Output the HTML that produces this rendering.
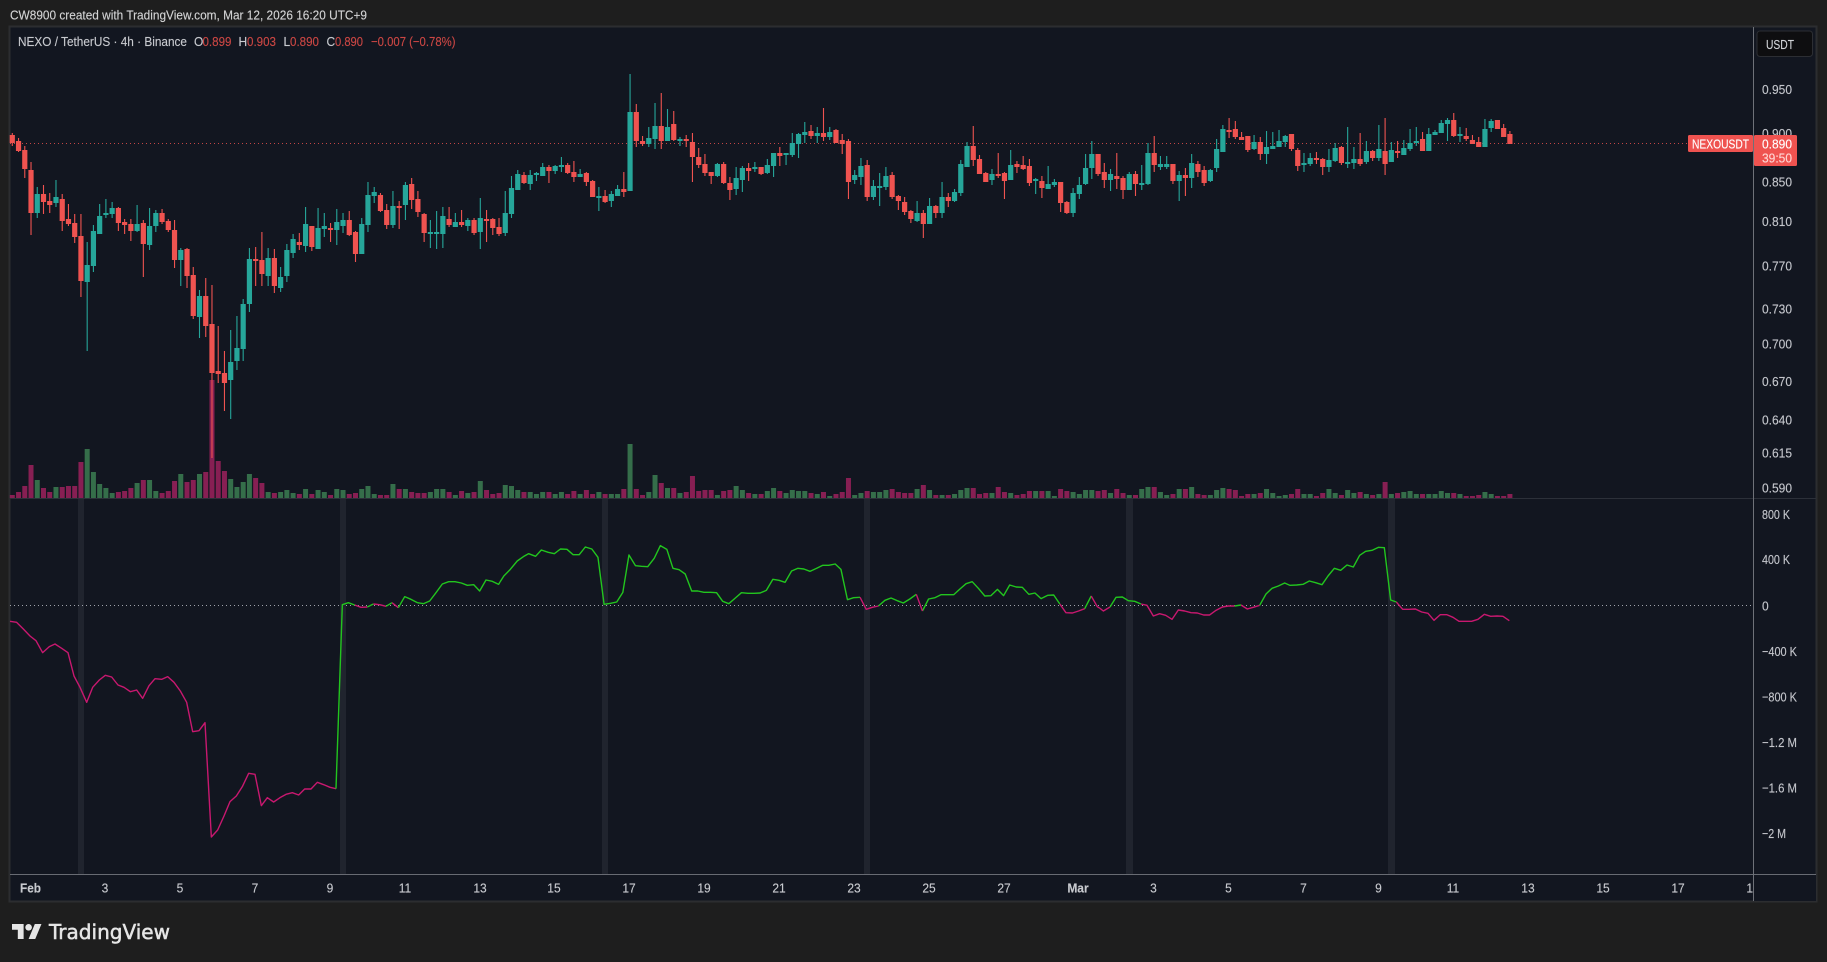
<!DOCTYPE html>
<html lang="en"><head><meta charset="utf-8"><title>NEXO / TetherUS chart</title>
<style>
html,body{margin:0;padding:0;background:#1e1e1e;width:1827px;height:962px;overflow:hidden}
svg{display:block;position:absolute;left:0;top:0}
text{font-family:"Liberation Sans",sans-serif;font-size:12px;fill:#c8cacf;stroke:#c8cacf;stroke-width:.2px;stroke-opacity:.6;transform-box:fill-box;transform-origin:50% 50%;transform:scaleY(1.1)}
path.n{vector-effect:non-scaling-stroke;fill:none}
.tr{fill:#cc4744;stroke:#cc4744}
.ax{fill:#c4c6cc}
</style></head>
<body>
<svg width="1827" height="962" viewBox="0 0 1827 962">
<rect width="1827" height="962" fill="#1e1e1e"/>
<text x="10" y="19" textLength="357" lengthAdjust="spacingAndGlyphs" style="fill:#d6d6d6">CW8900 created with TradingView.com, Mar 12, 2026 16:20 UTC+9</text>
<rect x="9.5" y="26.5" width="1807" height="875" fill="#121620" stroke="#2c2d30" stroke-width="2"/>

<!-- session bands -->
<g fill="#20242e">
<rect x="78" y="499" width="6" height="375"/><rect x="340" y="499" width="6" height="375"/><rect x="602" y="499" width="6" height="375"/><rect x="864" y="499" width="6" height="375"/><rect x="1126" y="499" width="7" height="375"/><rect x="1388" y="499" width="7" height="375"/>
</g>
<line x1="10" y1="143.5" x2="1690" y2="143.5" stroke="#ef5350" stroke-opacity=".8" stroke-dasharray="1 3"/>
<line x1="10" y1="605.5" x2="1753" y2="605.5" stroke="#b8bcc4" stroke-opacity=".85" stroke-dasharray="1 3"/>

<g transform="translate(12.3 0) scale(6.24 1)">
<!-- volume -->
<path class="n" stroke="#871f53" stroke-width="5" d="M0 498v-3M1 498v-6M2 498v-12M3 498v-33M5 498v-10M6 498v-6M8 498v-11M9 498v-12M10 498v-12M11 498v-36M17 498v-6M18 498v-7M19 498v-10M21 498v-18M24 498v-5M25 498v-7M26 498v-17M28 498v-16M29 498v-18M31 498v-26M32 498v-118M33 498v-37M34 498v-27M39 498v-20M40 498v-15M42 498v-5M46 498v-4M48 498v-4M51 498v-3M54 498v-4M55 498v-5M59 498v-3M60 498v-3M62 498v-9M64 498v-6M65 498v-5M66 498v-5M70 498v-6M72 498v-7M74 498v-6M76 498v-8M77 498v-4M78 498v-5M82 498v-6M86 498v-6M89 498v-4M90 498v-7M92 498v-8M93 498v-4M95 498v-4M98 498v-9M100 498v-9M101 498v-3M104 498v-15M106 498v-10M108 498v-6M109 498v-22M110 498v-7M111 498v-8M112 498v-8M114 498v-7M115 498v-8M118 498v-5M120 498v-4M123 498v-7M128 498v-5M130 498v-6M132 498v-4M133 498v-6M134 498v-20M137 498v-7M141 498v-9M142 498v-6M143 498v-5M144 498v-5M146 498v-13M148 498v-3M150 498v-3M154 498v-10M155 498v-4M156 498v-5M158 498v-11M159 498v-6M161 498v-3M162 498v-4M163 498v-7M165 498v-7M168 498v-9M169 498v-7M174 498v-7M175 498v-8M177 498v-9M178 498v-5M180 498v-3M183 498v-11M186 498v-4M188 498v-9M190 498v-4M191 498v-3M195 498v-9M196 498v-8M197 498v-2M198 498v-4M200 498v-5M205 498v-4M206 498v-9M209 498v-2M210 498v-5M213 498v-3M216 498v-6M218 498v-3M220 498v-16M222 498v-5M226 498v-4M231 498v-5M233 498v-2M234 498v-2M235 498v-3M238 498v-2M239 498v-2M240 498v-4"/>
<path class="n" stroke="#356e4a" stroke-width="5" d="M4 498v-18M7 498v-11M12 498v-49M13 498v-26M14 498v-14M15 498v-10M16 498v-5M20 498v-15M22 498v-18M23 498v-7M27 498v-24M30 498v-24M35 498v-19M36 498v-11M37 498v-16M38 498v-24M41 498v-6M43 498v-6M44 498v-8M45 498v-5M47 498v-9M49 498v-8M50 498v-6M52 498v-9M53 498v-8M56 498v-9M57 498v-12M58 498v-4M61 498v-14M63 498v-9M67 498v-6M68 498v-9M69 498v-9M71 498v-3M73 498v-5M75 498v-17M79 498v-13M80 498v-12M81 498v-8M83 498v-6M84 498v-4M85 498v-6M87 498v-4M88 498v-6M91 498v-4M94 498v-6M96 498v-4M97 498v-4M99 498v-54M102 498v-6M103 498v-23M105 498v-10M107 498v-5M113 498v-3M116 498v-12M117 498v-8M119 498v-4M121 498v-7M122 498v-10M124 498v-5M125 498v-8M126 498v-7M127 498v-7M129 498v-4M131 498v-2M135 498v-3M136 498v-5M138 498v-6M139 498v-6M140 498v-8M145 498v-9M147 498v-8M149 498v-3M151 498v-4M152 498v-8M153 498v-10M157 498v-5M160 498v-5M164 498v-7M166 498v-7M167 498v-2M170 498v-6M171 498v-4M172 498v-8M173 498v-8M176 498v-5M179 498v-3M181 498v-9M182 498v-11M184 498v-6M185 498v-3M187 498v-9M189 498v-11M192 498v-3M193 498v-8M194 498v-10M199 498v-4M201 498v-9M202 498v-5M203 498v-2M204 498v-3M207 498v-4M208 498v-4M211 498v-9M212 498v-5M214 498v-8M215 498v-5M217 498v-4M219 498v-4M221 498v-4M223 498v-6M224 498v-7M225 498v-4M227 498v-4M228 498v-4M229 498v-7M230 498v-5M232 498v-4M236 498v-6M237 498v-4"/>
<!-- red wicks -->
<path class="n" stroke="#ef5350" stroke-width="1.1" d="M0 133V146M1 138V152M2 146V178M3 162V235M5 185V214M6 193V213M8 194V231M9 204V226M10 214V243M11 214V297M17 207V231M18 219V234M19 219V241M21 220V277M24 209V224M25 219V232M26 220V268M28 248V288M29 267V319M31 278V337M32 285V458M33 326V383M34 351V411M39 247V286M40 232V286M42 249V293M46 233V250M48 226V251M51 223V242M54 211V236M55 231V262M59 193V212M60 204V229M62 201V229M64 178V209M65 191V217M66 213V242M70 207V227M72 210V227M74 218V235M76 210V242M77 218V235M78 218V236M82 172V184M86 165V183M89 163V174M90 161V182M92 172V186M93 180V197M95 190V203M98 172V197M100 104V147M101 136V146M104 93V149M106 111V141M108 135V147M109 133V182M110 148V168M111 154V176M112 172V184M114 162V184M115 177V200M118 163V181M120 167V175M123 147V166M128 125V139M130 108V141M132 129V143M133 134V154M134 139V199M137 160V201M141 172V199M142 195V210M143 197V215M144 210V223M146 210V238M148 205V218M150 193V207M154 126V166M155 155V174M156 172V182M158 153V178M159 172V199M161 161V173M162 156V170M163 159V186M165 176V198M168 182V212M169 201V214M174 154V176M175 163V188M177 153V189M178 176V199M180 171V196M183 136V172M186 164V184M188 168V196M190 161V177M191 166V186M195 118V138M196 121V139M197 132V140M198 136V152M200 137V160M205 134V151M206 148V171M209 152V164M210 158V175M213 146V165M216 133V166M218 150V161M220 118V175M222 141V158M226 132V151M231 113V137M233 128V141M234 135V144M235 137V147M238 120V129M239 124V137M240 131V144"/>
<!-- red bodies -->
<path class="n" stroke="#ef5350" stroke-width="5.2" d="M0 135V143M1 141V151M2 150V169M3 170V213M5 194V202M6 201V205M8 199V221M9 219V224M10 223V237M11 236V281M17 208V223M18 222V225M19 224V231M21 223V244M24 213V222M25 221V230M26 230V260M28 249V276M29 275V316M31 296V326M32 324V373M33 371V374M34 373V383M39 259V261M40 260V274M42 258V286M46 242V245M48 226V247M51 228V230M54 220V235M55 232V254M59 195V211M60 210V225M62 206V208M64 184V200M65 199V212M66 214V233M70 219V225M72 222V225M74 220V233M76 219V221M77 219V228M78 227V234M82 175V183M86 167V171M89 165V173M90 172V177M92 173V182M93 181V197M95 196V202M98 189V192M100 112V141M101 141V144M104 126V141M106 124V140M108 139V141M109 142V157M110 157V165M111 164V173M112 172V176M114 164V183M115 183V190M118 168V171M120 167V174M123 153V156M128 131V136M130 133V137M132 130V143M133 140V144M134 141V182M137 165V197M141 175V197M142 196V201M143 202V212M144 211V219M146 213V224M148 206V213M150 197V201M154 146V160M155 159V174M156 173V182M158 174V176M159 173V181M161 164V167M162 165V169M163 166V183M165 181V188M168 182V203M169 202V213M174 154V174M175 172V180M177 176V179M178 178V190M180 174V184M183 153V165M186 164V181M188 175V178M190 164V172M191 170V183M195 130V132M196 129V137M197 137V140M198 136V150M200 142V154M205 134V149M206 150V166M209 158V160M210 159V167M213 147V163M216 159V164M218 151V158M220 151V164M222 151V153M226 139V151M231 120V136M233 136V139M234 140V144M235 142V147M238 120V129M239 128V137M240 134V144"/>
<!-- teal wicks -->
<path class="n" stroke="#26a69a" stroke-width="1.1" d="M4 187V218M7 180V207M12 242V351M13 225V272M14 204V234M15 199V218M16 202V218M20 205V232M22 208V250M23 210V232M27 248V286M30 290V338M35 330V419M36 316V370M37 299V361M38 248V312M41 248V286M43 267V292M44 244V282M45 234V258M47 207V252M49 208V249M50 213V237M52 209V245M53 213V233M56 218V254M57 182V232M58 187V203M61 191V228M63 182V220M67 220V248M68 211V249M69 207V248M71 213V227M73 218V231M75 198V249M79 191V236M80 176V218M81 170V190M83 170V190M84 172V181M85 163V176M87 165V174M88 157V172M91 169V177M94 187V211M96 191V207M97 185V196M99 74V191M102 127V147M103 103V149M105 109V141M107 137V146M113 163V177M116 167V195M117 166V192M119 162V172M121 159V174M122 153V177M124 153V165M125 133V157M126 133V158M127 122V143M129 127V143M131 127V140M135 170V184M136 158V185M138 180V200M139 173V206M140 167V190M145 201V222M147 198V224M149 182V218M151 189V202M152 160V196M153 142V167M157 169V185M160 150V180M164 178V194M166 166V189M167 179V187M170 188V217M171 177V199M172 154V185M173 141V179M176 169V191M179 172V190M181 165V190M182 143V185M184 156V170M185 156V169M187 171V201M189 154V188M192 169V182M193 139V172M194 125V152M199 135V150M201 131V164M202 132V149M203 130V147M204 135V147M207 153V172M208 153V166M211 149V172M212 143V162M214 127V168M215 147V169M217 141V164M219 125V161M221 142V162M223 140V155M224 129V151M225 127V146M227 128V151M228 130V135M229 120V133M230 118V141M232 127V142M236 119V147M237 119V132"/>
<!-- teal bodies -->
<path class="n" stroke="#26a69a" stroke-width="5.2" d="M4 194V213M7 197V203M12 265V282M13 231V266M14 216V234M15 213V215M16 208V214M20 224V231M22 226V245M23 213V226M27 250V260M30 296V317M35 362V380M36 348V361M37 304V349M38 259V304M41 258V276M43 277V288M44 250V276M45 239V253M47 224V246M49 228V249M50 226V229M52 222V230M53 220V226M56 224V254M57 195V225M58 192V196M61 206V225M63 185V205M67 232V234M68 232V234M69 216V234M71 222V227M73 220V226M75 218V232M79 213V233M80 188V214M81 174V190M83 175V184M84 173V175M85 167V176M87 166V171M88 165V167M91 174V177M94 196V198M96 194V201M97 189V196M99 112V191M102 138V144M103 126V139M105 127V141M107 139V141M113 164V176M116 178V189M117 168V180M119 167V169M121 165V173M122 153V166M124 153V155M125 143V155M126 134V144M127 132V135M129 133V136M131 132V137M135 175V180M136 166V177M138 186V197M139 186V188M140 176V187M145 213V221M147 206V224M149 197V213M151 192V201M152 164V193M153 146V167M157 174V180M160 165V180M164 179V181M166 184V189M167 182V185M170 193V213M171 185V194M172 168V184M173 154V168M176 174V180M179 174V190M181 183V185M182 153V184M184 164V167M185 164V167M187 175V181M189 163V178M192 170V181M193 149V168M194 129V152M199 142V149M201 147V154M202 146V149M203 141V147M204 136V142M207 163V165M208 158V164M211 160V167M212 148V161M214 162V164M215 159V163M217 151V162M219 149V158M221 150V162M223 148V155M224 143V149M225 141V143M227 134V151M228 132V135M229 123V133M230 120V124M232 134V136M236 129V147M237 121V128"/>
</g>

<!-- indicator line -->
<g transform="translate(0 480) scale(.33333)" stroke-width="1.4" stroke-linejoin="round">
<path class="n" stroke="#c8186f" d="M30 424 50 427 70 447 90 468 108 482 128 518 148 500 165 492 185 505 204 518 222 588 240 622 260 667 278 622 298 600 316 586 335 591 354 615 372 622 391 635 410 630 428 655 447 617 465 596 485 598 503 590 522 607 541 633 560 667 578 755 597 752 615 728 634 1071 653 1050 672 1008 690 965 709 948 727 920 746 880 765 883 784 977 802 953 821 966 840 953 858 943 877 938 896 945 914 927 933 927 952 907 971 914 990 922 1008 926M1064 375 1083 382 1102 381M1120 372 1139 374 1158 379M1176 368 1195 383"/>
<path class="n" stroke="#22c51e" d="M1008 926 1027 374 1045 368 1064 375M1102 381 1120 372M1158 379 1176 368M1195 383 1214 350 1233 358 1252 368 1271 371 1289 363 1308 338 1327 312 1346 305 1365 305 1384 309 1402 316 1421 314 1439 333 1458 300 1477 304 1496 313 1500 306"/>
</g>
<g transform="translate(500 480) scale(.38265 .33333)" stroke-width="1.4" stroke-linejoin="round">
<path class="n" stroke="#22c51e" d="M0 306 10 288 27 268 45 243 61 230 75 221 93 229 108 210 126 217 142 221 158 207 175 208 191 224 207 224 223 201 240 207 256 232 272 373 289 370 305 366 321 337 337 225 354 257 370 259 386 260 403 235 419 197 436 208 452 265 468 269 484 282 501 333 517 333 533 337 550 337 566 338 582 364 598 371 615 354 631 338 648 340 664 340 680 339 696 331 713 298 729 301 745 307 762 273 778 265 794 267 810 274 827 265 843 256 859 256 876 252 891 268 908 359 924 353 941 352M989 378 1006 361 1022 354 1038 362 1054 369 1071 357 1088 343M1104 393 1120 357 1137 353 1153 344 1169 344 1186 344 1202 327 1218 311 1234 305 1251 326 1267 348 1283 347 1300 328 1316 347 1332 315 1349 321 1365 322 1382 343 1398 339 1414 356 1431 346 1447 345 1463 372M1528 386 1545 348"/>
<path class="n" stroke="#c8186f" d="M941 352 957 388 973 382 989 378M1088 343 1104 393M1463 372 1479 398 1496 399 1512 393 1528 386M1545 348 1561 380 1568 385"/>
</g>
<g transform="translate(1100 480) scale(.33333)" stroke-width="1.4" stroke-linejoin="round">
<path class="n" stroke="#c8186f" d="M0 385 10 393 30 381M123 372 141 376 160 408 179 401 197 406 216 418 235 390 254 393 273 398 292 399 311 405 329 405 348 391 367 381 385 378 404 378M423 375 442 387 460 382 479 376M889 366 908 388 927 388 946 387 965 396 984 400 1002 421 1021 404 1040 404 1059 412 1077 424 1096 424 1115 424 1134 418 1153 403 1172 409 1191 408 1209 409 1228 422"/>
<path class="n" stroke="#22c51e" d="M30 381 48 352 67 351 85 362 104 364 123 372M404 378 423 375M479 376 498 342 516 325 535 318 554 309 570 316 590 315 609 313 628 303 647 308 666 314 684 288 703 265 722 271 741 255 760 261 779 226 797 214 816 211 835 202 853 203 872 360 889 366"/>
</g>

<!-- separators -->
<line x1="10" y1="498.5" x2="1816" y2="498.5" stroke="#2c3039"/>
<line x1="10" y1="874.5" x2="1816" y2="874.5" stroke="#686b73"/>

<!-- legend -->
<text x="18" y="45.5" textLength="169" lengthAdjust="spacingAndGlyphs">NEXO / TetherUS · 4h · Binance</text>
<text x="194" y="45.5">O</text><text class="tr" x="202.500" y="45.5" textLength="29" lengthAdjust="spacingAndGlyphs">0.899</text>
<text x="238.5" y="45.5">H</text><text class="tr" x="247" y="45.5" textLength="29" lengthAdjust="spacingAndGlyphs">0.903</text>
<text x="283.5" y="45.5">L</text><text class="tr" x="290" y="45.5" textLength="29" lengthAdjust="spacingAndGlyphs">0.890</text>
<text x="326.5" y="45.5">C</text><text class="tr" x="335" y="45.5" textLength="28" lengthAdjust="spacingAndGlyphs">0.890</text>
<text class="tr" x="371" y="45.5" textLength="84.5" lengthAdjust="spacingAndGlyphs">−0.007 (−0.78%)</text>

<!-- time axis -->
<g font-weight="400" text-anchor="middle">
<text x="30.5" y="892" font-weight="700" textLength="21" lengthAdjust="spacingAndGlyphs">Feb</text>
<text x="105" y="892">3</text><text x="180" y="892">5</text><text x="255" y="892">7</text><text x="330" y="892">9</text><text x="405" y="892">11</text><text x="480" y="892">13</text><text x="554" y="892">15</text><text x="629" y="892">17</text><text x="704" y="892">19</text><text x="779" y="892">21</text><text x="854" y="892">23</text><text x="929" y="892">25</text><text x="1004" y="892">27</text>
<text x="1078" y="892" font-weight="700">Mar</text>
<text x="1153.5" y="892">3</text><text x="1228.5" y="892">5</text><text x="1303.5" y="892">7</text><text x="1378.5" y="892">9</text><text x="1453" y="892">11</text><text x="1528" y="892">13</text><text x="1603" y="892">15</text><text x="1678" y="892">17</text><text x="1753" y="892">19</text>
</g>
<rect x="1754" y="875" width="62" height="26" fill="#121620"/>
<line x1="1753.5" y1="27" x2="1753.5" y2="901" stroke="#6e7178"/>

<!-- price axis -->
<g>
<text class="ax" x="1762" y="93.5">0.950</text>
<text class="ax" x="1762" y="137.5">0.900</text>
<text class="ax" x="1762" y="186">0.850</text>
<text class="ax" x="1762" y="225.5">0.810</text>
<text class="ax" x="1762" y="270">0.770</text>
<text class="ax" x="1762" y="313">0.730</text>
<text class="ax" x="1762" y="348">0.700</text>
<text class="ax" x="1762" y="385.5">0.670</text>
<text class="ax" x="1762" y="424">0.640</text>
<text class="ax" x="1762" y="457">0.615</text>
<text class="ax" x="1762" y="492">0.590</text>
<text class="ax" x="1762" y="518.5" textLength="28" lengthAdjust="spacingAndGlyphs">800 K</text>
<text class="ax" x="1762" y="563.5" textLength="28" lengthAdjust="spacingAndGlyphs">400 K</text>
<text class="ax" x="1762" y="610">0</text>
<text class="ax" x="1762" y="655.5" textLength="35" lengthAdjust="spacingAndGlyphs">−400 K</text>
<text class="ax" x="1762" y="701" textLength="35" lengthAdjust="spacingAndGlyphs">−800 K</text>
<text class="ax" x="1762" y="746.5" textLength="35" lengthAdjust="spacingAndGlyphs">−1.2 M</text>
<text class="ax" x="1762" y="792" textLength="35" lengthAdjust="spacingAndGlyphs">−1.6 M</text>
<text class="ax" x="1762" y="837.5" textLength="24" lengthAdjust="spacingAndGlyphs">−2 M</text>
</g>

<!-- USDT button -->
<rect x="1757" y="31" width="55.5" height="25.5" rx="3" fill="#0e0e10" stroke="#2c2e33"/>
<text x="1766" y="48.5" textLength="28" lengthAdjust="spacingAndGlyphs" style="fill:#d4d6da">USDT</text>

<!-- last price labels -->
<rect x="1688" y="135" width="65" height="17" rx="1.5" fill="#ef5350"/>
<rect x="1754" y="135" width="43" height="31" rx="1.5" fill="#ef5350"/>
<text x="1692" y="148" textLength="57" lengthAdjust="spacingAndGlyphs" style="fill:#ffffff;stroke:#ffffff">NEXOUSDT</text>
<text x="1762" y="148" style="fill:#ffffff;stroke:#ffffff">0.890</text>
<text x="1762" y="162" style="fill:#ffd6d4;stroke:#ffd6d4">39:50</text>

<!-- logo -->
<g transform="translate(12 924) scale(.83)" fill="#e6e6e6">
<path d="M14 18H7V7H0V0h14v18zM28 18h-8L27.500 0h8L28 18z"/><circle cx="20" cy="4" r="4"/>
</g>
<text x="49" y="939" textLength="121" lengthAdjust="spacingAndGlyphs" style="fill:#e6e6e6;stroke:#e6e6e6;stroke-width:.5px;stroke-opacity:1;font-family:'DejaVu Sans',sans-serif;font-size:20px;transform:none">TradingView</text>
</svg>
</body></html>
